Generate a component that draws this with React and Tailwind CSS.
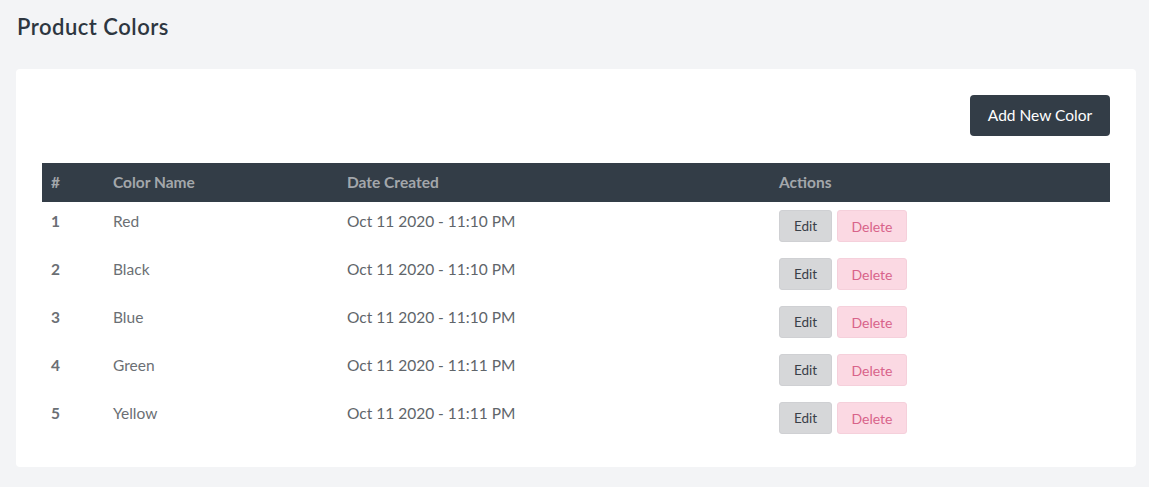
import React from "react";

const colors = [
  { id: 1, name: "Red", date: "Oct 11 2020 - 11:10 PM" },
  { id: 2, name: "Black", date: "Oct 11 2020 - 11:10 PM" },
  { id: 3, name: "Blue", date: "Oct 11 2020 - 11:10 PM" },
  { id: 4, name: "Green", date: "Oct 11 2020 - 11:11 PM" },
  { id: 5, name: "Yellow", date: "Oct 11 2020 - 11:11 PM" },
];

const App = () => {
  return (
    <div className="min-h-[487px] bg-[#f3f4f6] pl-4 pr-[13px] pt-[12px] font-['Lato',sans-serif]">
      {/* page title */}
      <h1 className="text-[22px] leading-[30px] tracking-[0.5px] font-semibold text-[#2d3640] pl-[1px]">
        Product Colors
      </h1>

      {/* card */}
      <div className="mt-[27px] bg-white rounded-[4px] pl-[26px] pr-[26px] pt-[26px] pb-[25px]">
        <div className="flex justify-end">
          <button className="h-[41px] w-[140px] bg-[#333d47] text-white text-[15.5px] rounded-[4px]">
            Add New Color
          </button>
        </div>

        {/* table */}
        <table className="mt-[27px] w-full table-fixed border-collapse">
          <thead>
            <tr className="bg-[#333d47] h-[39px] text-left text-[15.5px] text-[#a3a7ab]">
              <th className="w-[62px] pl-[9px] font-bold">#</th>
              <th className="w-[234px] pl-[9px] font-bold">Color Name</th>
              <th className="w-[432px] pl-[9px] font-bold">Date Created</th>
              <th className="pl-[9px] font-bold">Actions</th>
            </tr>
          </thead>
          <tbody>
            {colors.map((c) => (
              <tr key={c.id} className="h-[48px] text-[15.5px]">
                <td className="align-top pt-[7px] pl-[9px] leading-[24px] font-bold text-[#6b6f74]">
                  {c.id}
                </td>
                <td className="align-top pt-[7px] pl-[9px] leading-[24px] text-[#6b6f74]">
                  {c.name}
                </td>
                <td className="align-top pt-[7px] pl-[9px] leading-[24px] text-[#60656a]">
                  {c.date}
                </td>
                <td className="align-top pt-[8px] pl-[9px]">
                  <div className="flex gap-[5px]">
                    <button className="h-[32px] w-[53px] bg-[#d6d7d9] text-[#3a4048] text-[13.5px] rounded-[3px] border border-[#cfd0d3]">
                      Edit
                    </button>
                    <button className="h-[32px] w-[70px] bg-[#fbd9e3] text-[#d8638a] text-[14px] rounded-[3px] border border-[#f5d0db]">
                      Delete
                    </button>
                  </div>
                </td>
              </tr>
            ))}
          </tbody>
        </table>
      </div>
    </div>
  );
};

export default App;
